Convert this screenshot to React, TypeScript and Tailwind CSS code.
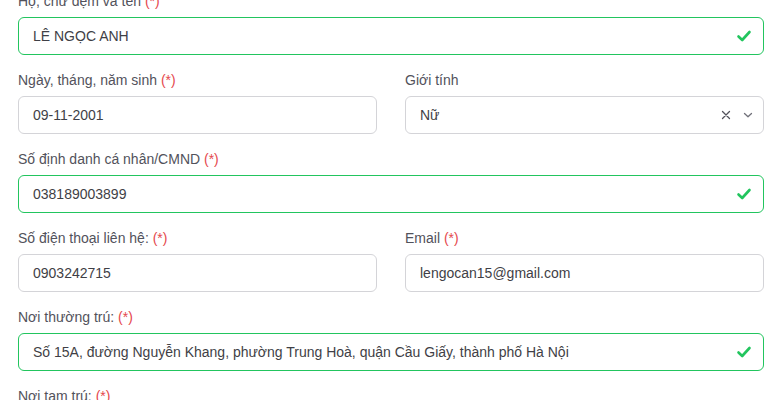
import React from "react";

function Req() {
  return <span className="text-[#e5484d]">(*)</span>;
}

function Label({ children, req }: { children: React.ReactNode; req?: boolean }) {
  return (
    <div className="mb-[6px] h-5 text-[14px] leading-5 text-[#52525b]">
      {children}
      {req ? <> <Req /></> : null}
    </div>
  );
}

function Check() {
  return (
    <svg width="16" height="16" viewBox="0 0 16 16" className="shrink-0">
      <path d="M2.5 8.5 L6.2 12 L13.5 4" fill="none" stroke="#22c55e" strokeWidth="2.6" strokeLinecap="round" strokeLinejoin="round" />
    </svg>
  );
}

function Input({ value, valid }: { value: string; valid?: boolean }) {
  return (
    <div
      className={`flex h-[38px] items-center rounded-md border bg-white pl-[14px] pr-[11px] text-[14px] text-[#3f3f46] ${
        valid ? "border-[#22c55e]" : "border-[#d4d4d8]"
      }`}
    >
      <span className="flex-1 truncate">{value}</span>
      {valid ? <Check /> : null}
    </div>
  );
}

function Field({ label, req, value, valid }: { label: string; req?: boolean; value: string; valid?: boolean }) {
  return (
    <div className="mb-[15px]">
      <Label req={req}>{label}</Label>
      <Input value={value} valid={valid} />
    </div>
  );
}

export default function App() {
  return (
    <div className="h-[400px] overflow-hidden bg-white font-['Liberation_Sans',Arial,sans-serif]">
      <div className="mt-[-9px] pl-[18px] pr-[17px]">
        <Field label="Họ, chữ đệm và tên" req value="LÊ NGỌC ANH" valid />
        <div className="grid grid-cols-2 gap-x-[28px]">
          <Field label="Ngày, tháng, năm sinh" req value="09-11-2001" />
          <div className="mb-[15px]">
            <Label>Giới tính</Label>
            <div className="flex h-[38px] items-center rounded-md border border-[#d4d4d8] bg-white pl-[14px] pr-[10px] text-[14px] text-[#3f3f46]">
              <span className="flex-1">Nữ</span>
              <svg width="10" height="10" viewBox="0 0 10 10" className="mr-[12px]">
                <path d="M1.5 1.5 L8.5 8.5 M8.5 1.5 L1.5 8.5" stroke="#52525b" strokeWidth="1.3" strokeLinecap="round" />
              </svg>
              <svg width="10" height="10" viewBox="0 0 10 10">
                <path d="M1.5 3.5 L5 6.8 L8.5 3.5" fill="none" stroke="#71717a" strokeWidth="1.3" strokeLinecap="round" strokeLinejoin="round" />
              </svg>
            </div>
          </div>
        </div>
        <Field label="Số định danh cá nhân/CMND" req value="038189003899" valid />
        <div className="grid grid-cols-2 gap-x-[28px]">
          <Field label="Số điện thoại liên hệ:" req value="0903242715" />
          <Field label="Email" req value="lengocan15@gmail.com" />
        </div>
        <Field
          label="Nơi thường trú:"
          req
          value="Số 15A, đường Nguyễn Khang, phường Trung Hoà, quận Cầu Giấy, thành phố Hà Nội"
          valid
        />
        <Label req>Nơi tạm trú:</Label>
      </div>
    </div>
  );
}
